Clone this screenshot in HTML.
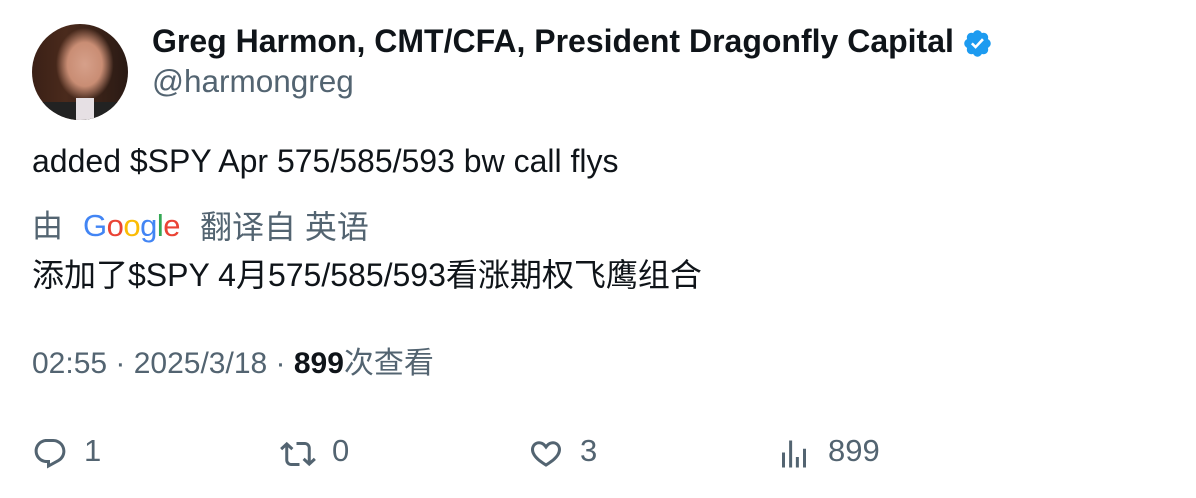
<!DOCTYPE html>
<html><head><meta charset="utf-8"><style>
body{margin:0;width:1196px;height:498px;background:#fff;font-family:"Liberation Sans","Noto Sans CJK SC",sans-serif;color:#0f1419;position:relative;overflow:hidden}
.a{position:absolute;white-space:nowrap}
.g{color:#536471}
</style></head><body>
<div class="a" style="left:32px;top:24px;width:96px;height:96px;border-radius:50%;background:radial-gradient(ellipse 30% 38% at 55% 42%,#d6a08a 0,#c98d74 60%,transparent 100%),linear-gradient(90deg,#3a2016 0,#4a2a1c 35%,#2a1a14 100%);overflow:hidden">
<div style="position:absolute;left:10px;top:78px;width:80px;height:24px;background:#222"></div>
<div style="position:absolute;left:44px;top:74px;width:18px;height:24px;background:#e6e0e4"></div></div>
<div class="a" style="left:152px;top:22px;font-size:32px;font-weight:bold;line-height:38px">Greg Harmon, CMT/CFA, President Dragonfly Capital</div>
<svg class="a" style="left:962px;top:28px" width="31" height="31" viewBox="0 0 24 24"><path fill="#1d9bf0" d="M22.25 12c0-1.43-.88-2.67-2.190-3.34.46-1.39.2-2.9-.81-3.91s-2.52-1.270-3.91-.81c-.66-1.310-1.910-2.190-3.340-2.190s-2.670.88-3.330 2.190c-1.400-.46-2.910-.2-3.920.81s-1.260 2.520-.8 3.910c-1.310.67-2.200 1.910-2.200 3.340s.89 2.670 2.200 3.340c-.46 1.390-.21 2.900.8 3.910s2.520 1.260 3.910.81c.67 1.310 1.910 2.190 3.340 2.190s2.680-.88 3.340-2.190c1.390.45 2.900.2 3.910-.81s1.270-2.520.81-3.910c1.310-.67 2.190-1.910 2.190-3.340z"/><path fill="#fff" d="M10.54 16.2l-3.6-3.6 1.42-1.42 2.18 2.2 4.94-5.4 1.48 1.36z"/></svg>
<div class="a g" style="left:152px;top:62px;font-size:31.5px;line-height:38px">@harmongreg</div>
<div class="a" style="left:32px;top:142px;font-size:32px;line-height:38px">added $SPY Apr 575/585/593 bw call flys</div>
<div class="a g" style="left:32px;top:207px;font-size:31px;line-height:40px">由</div>
<div class="a" style="left:83px;top:206px;font-size:31px;line-height:40px;letter-spacing:-0.5px"><span style="color:#4285f4">G</span><span style="color:#ea4335">o</span><span style="color:#fbbc05">o</span><span style="color:#4285f4">g</span><span style="color:#34a853">l</span><span style="color:#ea4335">e</span></div>
<div class="a g" style="left:200px;top:207px;font-size:32px;line-height:40px">翻译自 英语</div>
<div class="a" style="left:32px;top:255px;font-size:32px;line-height:40px">添加了$SPY 4月575/585/593看涨期权飞鹰组合</div>
<div class="a g" style="left:32px;top:345px;font-size:30px;line-height:38px">02:55 · 2025/3/18 · <b style="color:#0f1419">899</b>次查看</div>
<svg class="a" style="left:32px;top:436px" width="36" height="36" viewBox="0 0 24 24"><path fill="#536471" d="M1.75 10c0-4.42 3.58-8 8-8h4.36c4.48 0 8.14 3.63 8.14 8.13 0 2.96-1.6 5.68-4.19 7.11l-8.06 4.46v-3.69h-.07c-4.49.1-8.18-3.51-8.18-8.01zm8-6c-3.31 0-6 2.69-6 6 0 3.37 2.77 6.080 6.130 6.010l.35-.01h1.77v2.3l5.1-2.82c1.95-1.07 3.15-3.11 3.15-5.36 0-3.39-2.75-6.12-6.14-6.12z"/></svg>
<div class="a g" style="left:84px;top:432px;font-size:31px;line-height:38px">1</div>
<svg class="a" style="left:280px;top:436px" width="36" height="36" viewBox="0 0 24 24"><path fill="#536471" d="M4.5 3.88l4.43 4.14-1.36 1.46L5.5 7.55V16c0 1.1.9 2 2 2H13v2H7.5c-2.21 0-4-1.79-4-4V7.55L1.43 9.48.07 8.02 4.5 3.88zM16.5 6H11V4h5.5c2.21 0 4 1.79 4 4v8.45l2.07-1.93 1.36 1.46-4.43 4.14-4.43-4.14 1.36-1.46 2.07 1.93V8c0-1.1-.9-2-2-2z"/></svg>
<div class="a g" style="left:332px;top:432px;font-size:31px;line-height:38px">0</div>
<svg class="a" style="left:528px;top:436px" width="36" height="36" viewBox="0 0 24 24"><path fill="#536471" d="M16.7 5.5c-1.11-.03-2.4.49-3.47 1.89l-1.23 1.6-1.23-1.6C9.7 5.99 8.4 5.47 7.28 5.5 6.14 5.53 5.14 6.08 4.56 7.02c-.6.94-.83 2.42.07 4.33.87 1.84 2.97 4.14 7.37 6.8 4.4-2.66 6.5-4.96 7.37-6.8.9-1.910.67-3.390.07-4.330-.58-.94-1.580-1.490-2.720-1.520zm4.53 6.7c-1.14 2.42-3.7 5.06-8.73 8.01L12 20.5l-.5-.29c-5.03-2.95-7.59-5.59-8.73-8.01-1.15-2.440-.92-4.590.1-6.220C3.870 4.350 5.600 3.550 7.240 3.500c1.630-.05 3.300.62 4.760 2.130 1.460-1.510 3.130-2.180 4.760-2.130 1.640.05 3.370.85 4.370 2.480 1.020 1.630 1.250 3.780.1 6.220z"/></svg>
<div class="a g" style="left:580px;top:432px;font-size:31px;line-height:38px">3</div>
<svg class="a" style="left:776px;top:436px" width="36" height="36" viewBox="0 0 24 24"><path fill="#536471" d="M8.75 21V3h2v18h-2zM18 21V8.5h2V21h-2zM4 21l.004-10h2L6 21H4zm9.248 0v-7h2v7h-2z"/></svg>
<div class="a g" style="left:828px;top:432px;font-size:31px;line-height:38px">899</div>
</body></html>
